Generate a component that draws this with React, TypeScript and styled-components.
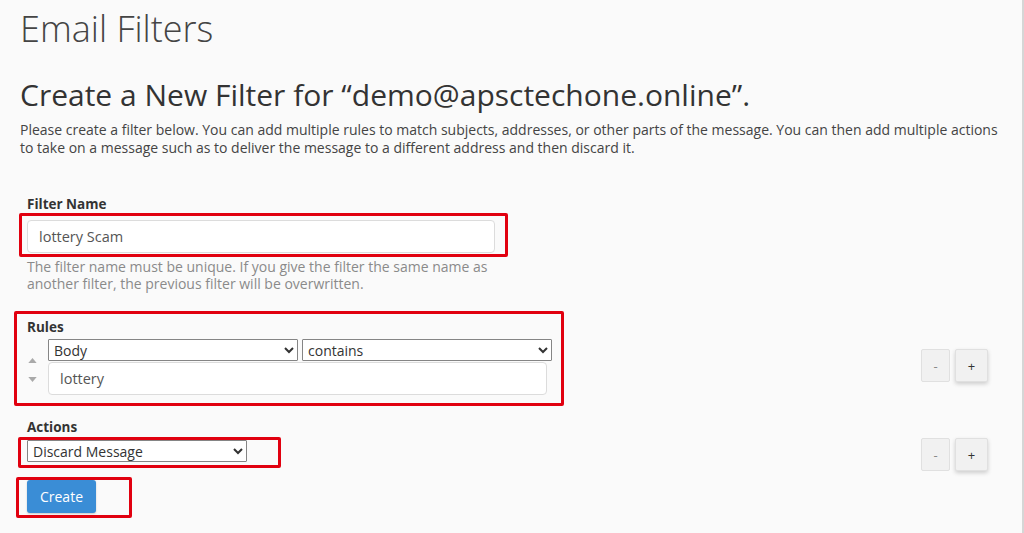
import React from "react";
import styled, { createGlobalStyle } from "styled-components";

const GlobalStyle = createGlobalStyle`
  html, body {
    margin: 0;
    padding: 0;
    background: #fafafa;
  }
  body {
    font-family: "Open Sans", "Liberation Sans", sans-serif;
    color: #333;
  }
`;

export default function App() {
  return (
    <>
      <GlobalStyle />
      <Page>
        <Title>Email Filters</Title>
        <SubTitle>Create a New Filter for “demo@apsctechone.online”.</SubTitle>
        <Intro>
          Please create a filter below. You can add multiple rules to match
          subjects, addresses, or other parts of the message. You can then add
          multiple actions to take on a message such as to deliver the message
          to a different address and then discard it.
        </Intro>

        <Form>
          <Label>Filter Name</Label>
          <Highlight $shift={-8} $pad="4px 10px 1px 5px">
            <TextInput $width={468} defaultValue="lottery Scam" />
          </Highlight>
          <Help>
            The filter name must be unique. If you give the filter the same
            name as another filter, the previous filter will be overwritten.
          </Help>

          <Row $top={19}>
            <Highlight $shift={-13} $pad="4px 9px 8px 10px">
              <Label>Rules</Label>
              <RuleBody>
                <Sorter>
                  <Arrow viewBox="0 0 10 6">
                    <path d="M5 0 L10 6 L0 6 Z" />
                  </Arrow>
                  <Arrow viewBox="0 0 10 6">
                    <path d="M0 0 L10 0 L5 6 Z" />
                  </Arrow>
                </Sorter>
                <RuleFields>
                  <SelectPair>
                    <Select $width={250} defaultValue="Body">
                      <option>Body</option>
                      <option>Subject</option>
                      <option>From</option>
                    </Select>
                    <Select $width={250} defaultValue="contains">
                      <option>contains</option>
                      <option>matches regex</option>
                    </Select>
                  </SelectPair>
                  <TextInput $width={499} defaultValue="lottery" />
                </RuleFields>
              </RuleBody>
            </Highlight>
            <Controls $top={38}>
              <SmallButton>-</SmallButton>
              <SmallButton $raised>+</SmallButton>
            </Controls>
          </Row>

          <Label $top={12}>Actions</Label>
          <Row $top={1}>
            <Highlight $shift={-9} $pad="0 31px 3px 6px">
              <Select $width={220} defaultValue="Discard Message">
                <option>Discard Message</option>
                <option>Redirect to Email</option>
              </Select>
            </Highlight>
            <Controls $top={1}>
              <SmallButton>-</SmallButton>
              <SmallButton $raised>+</SmallButton>
            </Controls>
          </Row>

          <Row $top={6}>
            <Highlight $shift={-11} $pad="0 33px 2px 8px">
              <PrimaryButton>Create</PrimaryButton>
            </Highlight>
          </Row>
        </Form>
      </Page>
    </>
  );
}

const Page = styled.div`
  min-height: 100vh;
  box-sizing: border-box;
  padding: 9px 20px 0 20px;
  border-right: 2px solid #d6d6d6;
`;

const Title = styled.h1`
  margin: 0;
  font-size: 36px;
  line-height: 40px;
  font-weight: 300;
  color: #444;
`;

const SubTitle = styled.h2`
  margin: 28px 0 0;
  font-size: 30px;
  line-height: 36px;
  font-weight: 400;
  color: #333;
`;

const Intro = styled.p`
  margin: 8px 0 0;
  font-size: 14px;
  line-height: 18px;
  color: #444;
`;

const Form = styled.div`
  margin-top: 38px;
  padding: 0 14px 0 7px;
`;

const Label = styled.div<{ $top?: number }>`
  margin-top: ${(p) => p.$top ?? 0}px;
  font-size: 13.5px;
  line-height: 18px;
  font-weight: 700;
  color: #333;
`;

const Highlight = styled.div<{ $shift: number; $pad: string }>`
  display: inline-block;
  margin-left: ${(p) => p.$shift}px;
  padding: ${(p) => p.$pad};
  border: 3px solid #e1000f;
  border-radius: 2px;
`;

const TextInput = styled.input<{ $width: number }>`
  display: block;
  box-sizing: border-box;
  width: ${(p) => p.$width}px;
  height: 33px;
  padding: 0 11px;
  border: 1px solid #dcdcdc;
  border-radius: 4px;
  background: #fff;
  font-family: "Open Sans", "Liberation Sans", sans-serif;
  font-size: 14.5px;
  color: #555;
  outline: none;
`;

const Help = styled.div`
  width: 472px;
  margin-top: 1px;
  font-size: 14px;
  line-height: 17px;
  color: #8a8a8a;
`;

const Row = styled.div<{ $top: number }>`
  display: flex;
  justify-content: space-between;
  align-items: flex-start;
  margin-top: ${(p) => p.$top}px;
`;

const RuleBody = styled.div`
  display: flex;
  align-items: center;
  margin-top: 3px;
`;

const Sorter = styled.div`
  display: flex;
  flex-direction: column;
  gap: 14px;
  width: 20px;
  padding-left: 1px;
  margin-top: 6px;
`;

const Arrow = styled.svg`
  width: 9px;
  height: 5px;
  fill: #a9a9a9;
`;

const RuleFields = styled.div`
  display: flex;
  flex-direction: column;
  gap: 1px;
`;

const SelectPair = styled.div`
  display: flex;
  gap: 4px;
`;

const Select = styled.select<{ $width: number }>`
  display: block;
  box-sizing: border-box;
  width: ${(p) => p.$width}px;
  height: 22px;
  padding: 0 1px;
  border: 1px solid #858585;
  border-radius: 1px;
  background: #fff;
  font-family: "Open Sans", "Liberation Sans", sans-serif;
  font-size: 14px;
  color: #333;
`;

const Controls = styled.div<{ $top: number }>`
  display: flex;
  gap: 5px;
  margin-top: ${(p) => p.$top}px;
`;

const SmallButton = styled.button<{ $raised?: boolean }>`
  width: ${(p) => (p.$raised ? 33 : 29)}px;
  height: 33px;
  padding: 0;
  border: 1px solid #e0e0e0;
  border-radius: 2px;
  background: #f1f1f1;
  font-family: "Open Sans", "Liberation Sans", sans-serif;
  font-size: 13px;
  color: ${(p) => (p.$raised ? "#333" : "#888")};
  box-shadow: ${(p) => (p.$raised ? "0 2px 4px rgba(0,0,0,0.18)" : "none")};
  cursor: pointer;
`;

const PrimaryButton = styled.button`
  display: block;
  width: 69px;
  height: 33px;
  border: none;
  border-radius: 3px;
  background: #3a8dd6;
  color: #fff;
  font-family: "Open Sans", "Liberation Sans", sans-serif;
  font-size: 14px;
  box-shadow: 0 1px 2px rgba(0, 0, 0, 0.2);
  cursor: pointer;
`;
